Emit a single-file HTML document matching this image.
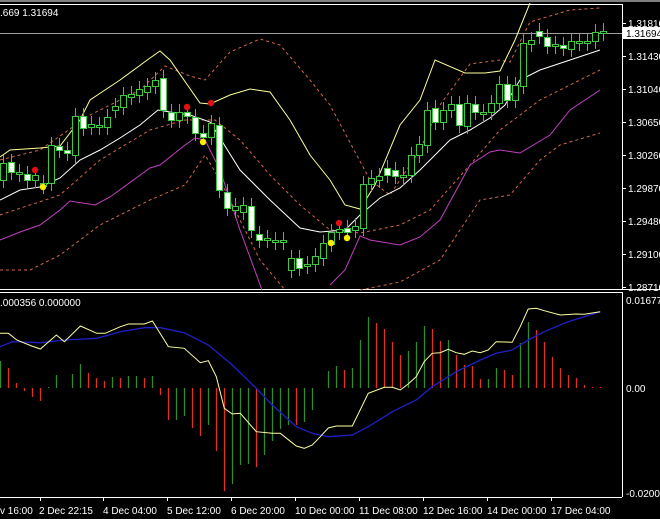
<!DOCTYPE html>
<html><head><meta charset="utf-8"><style>
html,body{margin:0;padding:0;background:#000;width:660px;height:519px;overflow:hidden}
svg{display:block}
text{font-family:"Liberation Sans",sans-serif;font-size:10px;fill:#fff}
</style></head><body>
<svg id="s" width="660" height="519" viewBox="0 0 660 519" xmlns="http://www.w3.org/2000/svg">
<rect width="660" height="519" fill="#000"/>
<rect x="0" y="0" width="660" height="2" fill="#808080"/>
<line x1="0" y1="4.5" x2="622" y2="4.5" stroke="#fff"/>
<line x1="622.5" y1="4" x2="622.5" y2="290" stroke="#fff"/>
<line x1="0" y1="289.5" x2="660" y2="289.5" stroke="#fff"/>
<line x1="0" y1="292.5" x2="622" y2="292.5" stroke="#fff"/>
<line x1="622.5" y1="292" x2="622.5" y2="497" stroke="#fff"/>
<line x1="0" y1="497.5" x2="622" y2="497.5" stroke="#fff"/>
<line x1="0" y1="33.5" x2="622" y2="33.5" stroke="#a0a0a0"/>
<text x="0" y="16">.669 1.31694</text>
<text x="0" y="306">.000356 0.000000</text>
<g id="g"></g>
<rect x="623" y="27" width="37" height="12" fill="#fff"/>
<text x="626" y="37" style="fill:#000">1.31694</text>
<g>
<text x="628" y="27">1.31810</text><text x="628" y="60">1.31430</text><text x="628" y="93">1.31040</text><text x="628" y="126">1.30650</text><text x="628" y="159">1.30260</text><text x="628" y="192">1.29870</text><text x="628" y="225">1.29480</text><text x="628" y="258">1.29100</text><text x="628" y="291">1.28710</text>
<text x="626" y="304">0.016775</text><text x="626" y="392">0.00</text><text x="626" y="497">-0.020095</text>
<text x="0" y="514">v 16:00</text><text x="39" y="514">2 Dec 22:15</text><text x="103" y="514">4 Dec 04:00</text><text x="167" y="514">5 Dec 12:00</text><text x="231" y="514">6 Dec 20:00</text><text x="295" y="514">10 Dec 00:00</text><text x="359" y="514">11 Dec 08:00</text><text x="423" y="514">12 Dec 16:00</text><text x="487" y="514">14 Dec 00:00</text><text x="551" y="514">17 Dec 04:00</text>
</g>
</svg>
<script>
var g=document.getElementById('g'),NS='http://www.w3.org/2000/svg',h='';
function pl(p,c,w,d){h+='<polyline fill="none" stroke="'+c+'" stroke-width="'+(w||1)+'"'+(d?' stroke-dasharray="3,3"':'')+' points="'+p+'"/>';}
// ticks
[23,56,89,122,155,188,221,254,287].forEach(function(y){h+='<line x1="622" y1="'+y+'.5" x2="626" y2="'+y+'.5" stroke="#fff"/>';});
[40,103,167,231,295,359,423,487,551].forEach(function(x){h+='<line x1="'+x+'.5" y1="497" x2="'+x+'.5" y2="501" stroke="#fff"/>';});
// bands
pl("0,160 40,150 90,115 140,90 165,66 190,76 205,80 230,52 260,39 280,45 310,80 330,105 370,180 390,195 420,150 440,105 470,64 500,60 510,62 530,22 570,10 600,8","#d2694b",1,1);
pl("0,215 60,195 100,160 150,130 185,120 215,120 240,140 270,175 300,205 330,230 360,233 400,225 430,210 470,165 500,130 540,100 570,85 600,70","#d2694b",1,1);
pl("0,270 30,270 60,255 100,225 150,200 185,185 205,155 220,180 260,260 285,290","#d2694b",1,1);
pl("360,290 400,282 440,260 460,230 480,200 510,195 540,160 560,145 600,133","#d2694b",1,1);
pl("0,157 10,150 40,148 60,146 80,120 90,100 120,80 150,58 160,51 170,60 200,103 210,104 230,95 250,89 270,92 290,120 310,155 330,180 345,205 360,209 375,185 400,125 420,100 435,60 465,73 485,73 500,71 515,40 530,3","#ffff99");
pl("0,200 20,190 40,187 60,178 80,160 100,150 120,138 140,125 158,110 170,112 190,115 210,122 240,170 270,200 300,228 320,232 345,230 360,215 380,198 400,188 420,170 450,140 470,130 490,118 505,105 520,80 540,70 570,60 600,50","#fff");
pl("0,240 20,232 40,225 60,210 70,201 95,205 110,197 150,168 160,165 185,145 195,138 205,140 220,170 240,230 262,290","#c040c0");
pl("330,285 345,270 360,236 370,240 400,245 420,237 440,220 470,165 490,152 500,150 520,153 550,135 570,110 600,90","#c040c0");
// candles: x, top, bottom, white
var C=[[0,163,180,0],[8,162,172,1],[16,172,174,0],[24,174,180,1],[32,175,180,0],[40,183,186,0],[48,145,183,0],[56,146,150,1],[64,150,153,1],[72,116,155,0],[80,116,128,1],[88,124,127,0],[96,125,127,0],[104,117,127,0],[112,106,110,0],[120,95,107,0],[128,94,97,0],[136,89,95,0],[144,86,92,0],[152,80,86,0],[160,78,110,1],[168,112,120,1],[176,112,120,0],[184,112,116,1],[192,117,133,1],[200,133,137,1],[208,123,137,0],[216,125,190,1],[224,192,208,1],[232,206,210,0],[240,205,212,0],[248,206,230,1],[256,234,240,1],[264,238,240,0],[272,240,242,0],[280,240,242,0],[288,258,270,0],[296,258,268,1],[304,264,266,0],[312,256,264,0],[320,243,258,0],[328,232,244,0],[336,229,232,0],[344,228,232,1],[352,226,230,0],[360,184,228,0],[368,178,184,0],[376,176,180,0],[384,168,175,1],[392,170,176,1],[400,175,177,0],[408,155,175,0],[416,144,155,0],[424,110,145,0],[432,108,122,1],[440,110,122,0],[448,104,110,0],[456,104,125,1],[464,103,126,0],[472,104,112,1],[480,112,114,0],[488,103,112,0],[496,84,103,0],[504,84,100,1],[512,85,100,0],[520,43,86,0],[528,40,44,0],[536,31,36,1],[544,37,46,1],[552,44,46,0],[560,45,48,1],[568,41,49,0],[576,41,43,0],[584,41,43,0],[592,32,41,0],[600,31,33,0]];
C.forEach(function(c){var x=c[0]+3;h+='<line x1="'+(x+.5)+'" y1="'+(c[1]-8)+'" x2="'+(x+.5)+'" y2="'+(c[2]+8)+'" stroke="#3ec83e"/>';
h+='<rect x="'+(x-2.5)+'" y="'+(c[1]+.5)+'" width="6" height="'+Math.max(1,c[2]-c[1])+'" fill="'+(c[3]?'#fff':'#000')+'" stroke="#3ec83e"/>';});
[[32,170],[184,107],[208,103],[336,223]].forEach(function(p){h+='<circle cx="'+(p[0]+3)+'" cy="'+p[1]+'" r="3.2" fill="#e01010"/>';});
[[40,187],[200,142],[328,243],[344,238]].forEach(function(p){h+='<circle cx="'+(p[0]+3)+'" cy="'+p[1]+'" r="3.2" fill="#ffee00"/>';});
// histogram
var H=[[27,'g'],[20,'r'],[5,'r'],[-3,'r'],[-9,'r'],[-13,'r'],[1,'g'],[13,'g'],[0,'g'],[14,'g'],[24,'g'],[15,'r'],[10,'r'],[7,'r'],[11,'g'],[10,'r'],[12,'g'],[12,'g'],[10,'r'],[12,'g'],[-7,'r'],[-32,'r'],[-32,'g'],[-28,'g'],[-40,'r'],[-48,'r'],[-37,'g'],[-63,'r'],[-103,'r'],[-96,'g'],[-77,'g'],[-76,'g'],[-79,'r'],[-67,'g'],[-53,'g'],[-41,'g'],[-37,'g'],[-37,'r'],[-34,'g'],[-22,'g'],[0,'g'],[17,'g'],[22,'g'],[18,'r'],[20,'g'],[48,'g'],[71,'g'],[65,'r'],[59,'r'],[46,'r'],[33,'r'],[37,'g'],[46,'g'],[62,'g'],[59,'r'],[47,'r'],[48,'g'],[33,'r'],[23,'r'],[22,'r'],[9,'r'],[9,'g'],[20,'g'],[18,'r'],[13,'r'],[45,'g'],[66,'g'],[58,'r'],[46,'r'],[31,'r'],[20,'r'],[13,'r'],[10,'r'],[3,'r'],[1,'r'],[1,'r']];
H.forEach(function(b,i){var x=i*8+0.5,z=388;h+='<line x1="'+x+'" y1="'+z+'" x2="'+x+'" y2="'+(z-b[0])+'" stroke="'+(b[1]=='g'?'#2e8b2e':'#e03020')+'" stroke-width="1.3"/>';});
function lp(a){var o=[];for(var i=0;i<a.length;i+=2)o.push((a[i]/2.376).toFixed(1)+','+(a[i+1]/3+290).toFixed(1));return o.join(' ');}
pl(lp([0,170,30,155,96,158,153,150,230,145,286,125,343,113,381,113,438,128,495,165,552,225,609,295,647,345,704,410,742,430,780,440,837,435,875,410,932,365,989,330,1027,290,1084,245,1141,210,1179,190,1217,180,1255,150,1293,125,1350,95,1426,65]),"#2020c8",1.3);
pl(lp([0,130,20,130,40,150,75,168,96,177,134,135,153,155,191,108,230,130,250,130,286,110,305,102,343,102,362,93,400,170,438,175,476,218,495,212,514,260,533,355,552,372,571,370,609,425,647,430,666,430,704,468,723,475,742,465,761,440,780,414,799,408,837,408,875,310,913,292,932,292,951,300,970,282,989,260,1008,215,1027,190,1046,188,1065,178,1084,188,1103,193,1122,183,1141,188,1160,180,1179,155,1217,157,1236,110,1255,57,1274,55,1293,62,1331,75,1369,72,1388,73,1426,65]),"#ffffa0");
g.innerHTML=h;
</script>
</body></html>
